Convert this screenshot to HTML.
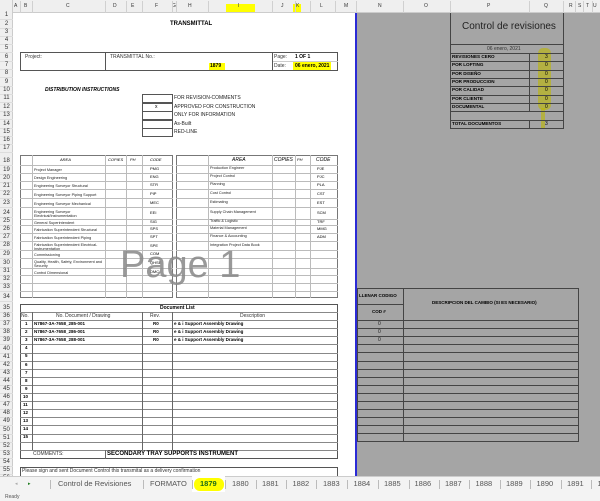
<!DOCTYPE html>
<html><head><meta charset="utf-8">
<style>
*{margin:0;padding:0;box-sizing:border-box}
body{width:600px;height:501px;overflow:hidden;background:#fff;font-family:"Liberation Sans",sans-serif;position:relative;color:#000}
.a{position:absolute}
.t{position:absolute;white-space:nowrap;font-size:5px;line-height:1}
.b{position:absolute;border:1px solid #555}
.rn{position:absolute;left:0;width:13px;font-size:6px;text-align:center;color:#333;line-height:1}
.ch{position:absolute;top:3px;font-size:5px;color:#333}
</style></head><body>
<div class="a" style="left:0;top:0;width:600px;height:13px;background:#efefef;border-bottom:1px solid #ccc"></div>
<div class="a" style="left:0;top:0;width:13px;height:501px;background:#efefef;border-right:1px solid #ccc"></div>
<div class="a" style="left:226px;top:4px;width:29px;height:8px;background:#ffff00"></div>
<div class="a" style="left:293px;top:4px;width:8px;height:8px;background:#ffff00"></div>
<div id="ch"></div>
<div class="a" style="left:357px;top:13px;width:243px;height:463px;background:#a5a5a5"></div>
<div class="a" style="left:355px;top:13px;width:2px;height:463px;background:#2b2bd6"></div>
<div id="rows"></div>

<div class="t" style="left:170px;top:21px;font-size:6px;font-weight:bold">TRANSMITTAL</div>
<div class="b" style="left:20px;top:52px;width:318px;height:19px"></div>
<div class="a" style="left:105px;top:52px;width:1px;height:19px;background:#555"></div>
<div class="a" style="left:272px;top:52px;width:1px;height:19px;background:#555"></div>
<div class="a" style="left:273px;top:61px;width:65px;height:1px;background:#ccc"></div>
<div class="t" style="left:25px;top:55px;color:#333">Project:</div>
<div class="t" style="left:110px;top:55px;color:#333">TRANSMITTAL No.:</div>
<div class="a" style="left:209px;top:63px;width:16px;height:7px;background:#ff0"></div>
<div class="t" style="left:210px;top:64px;font-weight:bold">1879</div>
<div class="t" style="left:274px;top:55px;color:#333">Page:</div>
<div class="t" style="left:295px;top:55px;font-weight:bold">1 OF 1</div>
<div class="t" style="left:274px;top:64px;color:#333">Date:</div>
<div class="a" style="left:293px;top:62px;width:38px;height:8px;background:#ff0"></div>
<div class="t" style="left:295px;top:64px;font-weight:bold">06 enero, 2021</div>
<div class="t" style="left:45px;top:88px;font-weight:bold;font-style:italic">DISTRIBUTION INSTRUCTIONS</div>
<div id="chk"></div>

<div class="b" style="left:20px;top:155px;width:153px;height:143px;border-color:#777"></div>
<div class="b" style="left:176px;top:155px;width:162px;height:143px;border-color:#777"></div>
<div id="area"></div>
<div class="t" style="left:120px;top:246px;font-size:38px;color:#888;opacity:.85">Page 1</div>

<div class="b" style="left:20px;top:304px;width:318px;height:155px"></div>
<div class="t" style="left:160px;top:306px;font-weight:bold">Document List</div>
<div id="doc"></div>
<div class="b" style="left:20px;top:467px;width:318px;height:12px;border-bottom:none"></div>
<div class="t" style="left:22px;top:469px;color:#333">Please sign and sent Document Control this transmital as a delivery confirmation</div>

<div class="b" style="left:450px;top:13px;width:114px;height:116px;border-top:none;border-color:#444;background:transparent"></div>
<div class="t" style="left:462px;top:22px;font-size:10px;color:#222">Control de revisiones</div>
<div class="a" style="left:450px;top:44px;width:114px;height:1px;background:#444"></div>
<div class="t" style="left:487px;top:47px;color:#333">06 enero, 2021</div>
<div class="a" style="left:538px;top:48px;width:13px;height:62px;background:#bdb800;border-radius:5px;opacity:.6"></div>
<div class="a" style="left:541px;top:108px;width:4px;height:20px;background:#bdb800;opacity:.6"></div>
<div id="rev"></div>
<div class="b" style="left:450px;top:120px;width:114px;height:9px;border-color:#444"></div>
<div class="a" style="left:529px;top:120px;width:1px;height:9px;background:#444"></div>
<div class="t" style="left:452px;top:122px;font-weight:bold;font-size:4.6px">TOTAL DOCUMENTOS</div>
<div class="t" style="left:545px;top:122px">3</div>
<div class="b" style="left:357px;top:288px;width:222px;height:154px;border-color:#444"></div>
<div class="a" style="left:403px;top:288px;width:1px;height:154px;background:#444"></div>
<div class="a" style="left:357px;top:304px;width:46px;height:1px;background:#444"></div>
<div class="t" style="left:359px;top:294px;font-weight:bold;font-size:4.5px">LLENAR CODIGO</div>
<div class="t" style="left:372px;top:310px;font-weight:bold;font-size:4.5px">COD #</div>
<div class="t" style="left:432px;top:301px;font-weight:bold;font-size:4.5px">DESCRIPCION DEL CAMBIO (SI ES NECESARIO)</div>
<div id="low"></div>

<div class="a" style="left:0;top:476px;width:600px;height:16px;background:#f3f3f3;border-top:1px solid #ccc"></div>
<div class="t" style="left:15px;top:482px;color:#aaa">◂</div>
<div class="t" style="left:28px;top:482px;color:#1a7a1a">▸</div>
<div id="tabs"></div>
<div class="a" style="left:0;top:492px;width:600px;height:9px;background:#f3f3f3"></div>
<div class="t" style="left:5px;top:495px;color:#555">Ready</div>

<script>
function h(id,s){document.getElementById(id).innerHTML=s}
var s='';
var cols=[['A',16],['B',26],['C',68],['D',115],['E',133],['F',157],['G',174],['H',190],['I',240],['J',283],['K',298],['L',322],['M',346],['N',380],['O',426],['P',489],['Q',546],['R',571],['S',580],['T',588],['U',595]];
var bnd=[20,32,105,126,142,172,176,208,272,295,310,335,356,403,450,529,563,575,583,592];
cols.forEach(c=>s+='<div class="ch" style="left:'+(c[1]-2)+'px">'+c[0]+'</div>');
bnd.forEach(x=>s+='<div class="a" style="left:'+x+'px;top:1px;width:1px;height:12px;background:#d0d0d0"></div>');
h('ch',s);
var cen=[15,24,32,40,48,57,65,73,82,90,98,107,115,124,132,140,148,161,170,178,186,194,203,213,221,229,237,245,254,263,271,279,287,297,308];
for(var r=36;r<=56;r++)cen.push(308+(r-35)*8.1);
s='';cen.forEach((y,i)=>{s+='<div class="rn" style="top:'+(y-3)+'px">'+(i+1)+'</div>';s+='<div class="a" style="left:0;top:'+(y+4)+'px;width:13px;height:1px;background:#ddd"></div>'});
h('rows',s);
s='';var labs=['FOR REVISION-COMMENTS','APPROVED FOR CONSTRUCTION','ONLY FOR INFORMATION','As-Built','RED-LINE'];
labs.forEach((l,i)=>{var y=94+i*8.6;s+='<div class="b" style="left:142px;top:'+y+'px;width:31px;height:9px"></div><div class="t" style="left:174px;top:'+(y+2)+'px;color:#222">'+l+'</div>';if(i==1)s+='<div class="t" style="left:155px;top:'+(y+2)+'px">x</div>'});
h('chk',s);
s='';var tops=[155,165,173,181,189,198,207,219,225,233,241,250,258,268,275,283,291,298];
tops.slice(1,-1).forEach(y=>{s+='<div class="a" style="left:20px;top:'+y+'px;width:153px;height:1px;background:#bbb"></div><div class="a" style="left:176px;top:'+y+'px;width:162px;height:1px;background:#bbb"></div>'});
[32,105,126,142].forEach(x=>s+='<div class="a" style="left:'+x+'px;top:155px;width:1px;height:143px;background:#bbb"></div>');
[208,272,295,310].forEach(x=>s+='<div class="a" style="left:'+x+'px;top:155px;width:1px;height:143px;background:#bbb"></div>');
var L=[['Project Manager','PMG'],['Design Engineering','ENG'],['Engineering Surveyor Structural','STR'],['Engineering Surveyor Piping Support','PIP'],['Engineering Surveyor Mechanical','MEC'],['Engineering Surveyor Electrical/Instrumentation','EEI'],['General Superintendent','SIG'],['Fabrication Superintendent Structural','SPS'],['Fabrication Superintendent Piping','SPT'],['Fabrication Superintendent Electrical-Instrumentation','SPE'],['Commissioning','COM'],['Quality, Health, Safety, Environment and Security','QHSE'],['Control Dimensional','DMC']];
var R=[['Production Engineer','PJE'],['Project Control','PJC'],['Planning','PLA'],['Cost Control','CST'],['Estimating','EST'],['Supply Chain Management','SCM'],['Traffic & Logistic','TRF'],['Material Management','MMG'],['Finance & Accounting','ADM'],['Integration Project Data Book','']];
s+='<div class="t" style="left:60px;top:158px;font-size:4px;font-style:italic">AREA</div><div class="t" style="left:108px;top:158px;font-size:4px;font-style:italic">COPIES</div><div class="t" style="left:130px;top:158px;font-size:4px;font-style:italic">PH</div><div class="t" style="left:150px;top:158px;font-size:4px;font-style:italic">CODE</div>';
s+='<div class="t" style="left:232px;top:158px;font-style:italic">AREA</div><div class="t" style="left:274px;top:158px;font-style:italic">COPIES</div><div class="t" style="left:297px;top:158px;font-size:4px;font-style:italic">PH</div><div class="t" style="left:316px;top:158px;font-style:italic">CODE</div>';
L.forEach((a,i)=>{var y=tops[i+1],hh=tops[i+2]-y;s+='<div class="a" style="left:34px;top:'+(y+1)+'px;width:70px;height:'+hh+'px;font-size:3.8px;line-height:4px;display:flex;align-items:center;color:#222">'+a[0]+'</div><div class="t" style="left:150px;top:'+(y+hh/2-2)+'px;font-size:4px">'+a[1]+'</div>'});
R.forEach((a,i)=>{var y=tops[i+1],hh=tops[i+2]-y;s+='<div class="t" style="left:210px;top:'+(y+hh/2-2)+'px;font-size:3.8px;color:#222">'+a[0]+'</div><div class="t" style="left:317px;top:'+(y+hh/2-2)+'px;font-size:4px">'+a[1]+'</div>'});
h('area',s);
s='';for(var i=0;i<18;i++){var y=312+i*8.1;s+='<div class="a" style="left:20px;top:'+y+'px;width:318px;height:1px;background:#888"></div>'}
[32,142,172].forEach(x=>s+='<div class="a" style="left:'+x+'px;top:312px;width:1px;height:138px;background:#666"></div>');
s+='<div class="a" style="left:105px;top:450px;width:1px;height:9px;background:#666"></div>';
s+='<div class="t" style="left:21px;top:314px;color:#333">No.</div><div class="t" style="left:56px;top:314px;color:#333">No. Document / Drawing</div><div class="t" style="left:150px;top:314px;color:#333">Rev.</div><div class="t" style="left:240px;top:314px;color:#333">Description</div>';
var D=['N7867-3A-7658_285-001','N7867-3A-7658_286-001','N7867-3A-7658_288-001'];
for(var i=1;i<=15;i++){var y=320+(i-1)*8.1+2;s+='<div class="t" style="left:'+(i<10?25:23)+'px;top:'+y+'px;font-weight:bold;font-size:4.5px">'+i+'</div>';if(i<=3)s+='<div class="t" style="left:34px;top:'+y+'px;font-weight:bold;font-size:4.5px">'+D[i-1]+'</div><div class="t" style="left:153px;top:'+y+'px;font-weight:bold;font-size:4.5px">R0</div><div class="t" style="left:174px;top:'+y+'px;font-weight:bold;font-size:4.5px">e &amp; i  Support Assembly Drawing</div>';}
s+='<div class="t" style="left:33px;top:452px;color:#333">COMMENTS:</div><div class="t" style="left:107px;top:451px;font-weight:bold;font-size:6px">SECONDARY TRAY SUPPORTS INSTRUMENT</div>';
h('doc',s);
s='';var rl=['REVISIONES CERO','POR LOFTING','POR DISEÑO','POR PRODUCCION','POR CALIDAD','POR CLIENTE','DOCUMENTAL'],rv=[3,0,0,0,0,0,0];
s+='<div class="a" style="left:450px;top:53px;width:114px;height:1px;background:#444"></div>';
rl.forEach((l,i)=>{var y=53+i*8.3;s+='<div class="a" style="left:450px;top:'+(y+8.3)+'px;width:114px;height:1px;background:#444"></div><div class="t" style="left:452px;top:'+(y+2)+'px;font-weight:bold;font-size:4.6px">'+l+'</div><div class="t" style="left:545px;top:'+(y+2)+'px">'+rv[i]+'</div>'});
s+='<div class="a" style="left:529px;top:53px;width:1px;height:58px;background:#444"></div>';
h('rev',s);
s='';for(var i=0;i<15;i++){var y=320+i*8.1;s+='<div class="a" style="left:357px;top:'+y+'px;width:222px;height:1px;background:#444"></div>';if(i<3)s+='<div class="t" style="left:378px;top:'+(y+2)+'px;color:#222">0</div>'}
h('low',s);
s='';var tb=[['Control de Revisiones',58],['FORMATO',150],['1879',200],['1880',232]];
for(var n=1881;n<=1892;n++)tb.push([''+n,262+(n-1881)*30.5]);
tb.forEach(t=>{if(t[0]=='1879')s+='<div class="a" style="left:192px;top:476px;width:33px;height:16px;background:#fff"></div><div class="a" style="left:194px;top:478px;width:30px;height:13px;background:#ffff00;border-radius:6px"></div>';s+='<div class="t" style="left:'+t[1]+'px;top:480px;font-size:7.5px;color:'+(t[0]=='1879'?'#1a6a1a;font-weight:bold':'#555')+'">'+t[0]+'</div>'});
[50,143,192,225,256,286,316,347,378,409,439,469,500,530,561,591].forEach(x=>s+='<div class="a" style="left:'+x+'px;top:480px;width:1px;height:9px;background:#bbb"></div>');
h('tabs',s);
</script>
</body></html>
